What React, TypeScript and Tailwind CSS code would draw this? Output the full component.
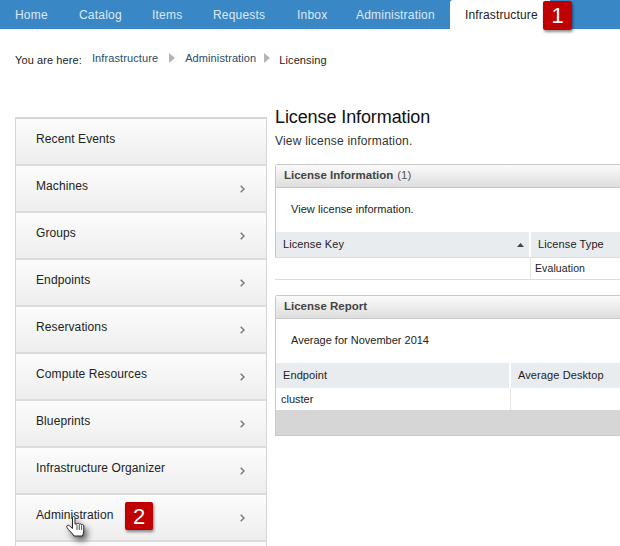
const navItems = [
  { label: 'Home', width: 'w-[64px]' },
  { label: 'Catalog', width: 'w-[73px]' },
  { label: 'Items', width: 'w-[61px]' },
  { label: 'Requests', width: 'w-[84px]' },
  { label: 'Inbox', width: 'w-[59px]' },
  { label: 'Administration', width: 'w-[94px]' },
];

const menuItems = [
  { label: 'Recent Events', arrow: false },
  { label: 'Machines', arrow: true },
  { label: 'Groups', arrow: true },
  { label: 'Endpoints', arrow: true },
  { label: 'Reservations', arrow: true },
  { label: 'Compute Resources', arrow: true },
  { label: 'Blueprints', arrow: true },
  { label: 'Infrastructure Organizer', arrow: true },
  { label: 'Administration', arrow: true },
  { label: '', arrow: false },
];

const Badge = ({ n, className }: { n: string; className: string }) => (
  <div className={`absolute flex items-center justify-center rounded-[2px] bg-[#c00000] text-[22px] text-white shadow-[1px_2px_3px_rgba(0,0,0,0.45)] ${className}`}>
    {n}
  </div>
);

const Crumb = () => (
  <svg width="6" height="10" viewBox="0 0 6 10" className="mb-[3px]">
    <path d="M0 0 L6 5 L0 10 Z" fill="#b5b5b5" />
  </svg>
);

const PanelHeader = ({ title, count }: { title: string; count?: string }) => (
  <div className="flex h-[23px] items-center border-b border-[#c8c8c8] bg-gradient-to-b from-[#fafafa] to-[#dedede] pl-[8px] text-[11.5px] font-bold text-[#444]">
    {title}
    {count && <span className="ml-[4px] font-normal text-[#555]">{count}</span>}
  </div>
);

export default function App() {
  return (
    <div className="relative h-[546px] w-[620px] overflow-hidden bg-white font-['Liberation_Sans',Arial,sans-serif] text-[12px] text-[#222]">
      {/* top nav */}
      <div className="flex h-[29px] items-stretch bg-[#3a87c5] pl-[15px] text-[12px] tracking-[0.2px] text-[#dbe9f5]">
        {navItems.map(item => (
          <div key={item.label} className={`flex items-center ${item.width}`}>
            {item.label}
          </div>
        ))}
        <div className="flex w-[100px] items-center rounded-tl-[3px] bg-white pl-[15px] tracking-[0.15px] text-[#222]">Infrastructure</div>
      </div>
      <Badge n="1" className="left-[543px] top-[1px] h-[29px] w-[29px]" />

      {/* breadcrumb */}
      <div className="mt-[23px] flex h-[15px] items-center pl-[15px] text-[11px] tracking-[0.1px]">
        <span className="mt-[1px]">You are here:</span>
        <span className="mb-[2px] ml-[10px] text-[#2a4a6b]">Infrastructure</span>
        <span className="ml-[11px]"><Crumb /></span>
        <span className="mb-[2px] ml-[10px] text-[#2a4a6b]">Administration</span>
        <span className="ml-[8px]"><Crumb /></span>
        <span className="mt-[1px] pl-[9px]">Licensing</span>
      </div>

      <div className="mt-[28px] flex items-start pl-[15px]">
        {/* side menu */}
        <div className="mt-[22px] w-[252px] shrink-0 border-t-2 border-r border-l border-[#d6d6d6]">
          {menuItems.map(item => (
            <div
              key={item.label || 'next'}
              className="flex h-[47px] items-start justify-between border-b-2 border-[#dcdcdc] bg-gradient-to-b from-[#fcfcfc] to-[#eeeeee] pt-[11px] pl-[20px] pr-[21px] text-[12px] tracking-[0.1px] last:border-b-0"
            >
              <span>{item.label}</span>
              {item.arrow && (
                <svg width="5" height="8" viewBox="0 0 5 8" className="mt-[8px]">
                  <path d="M0.7 0.7 L4 4 L0.7 7.3" fill="none" stroke="#777" strokeWidth="1.4" />
                </svg>
              )}
            </div>
          ))}
        </div>

        {/* content */}
        <div className="ml-[8px] w-[400px] shrink-0">
          <h1 className="mt-[10px] text-[18px] leading-[24px] tracking-[-0.1px] text-[#111]">License Information</h1>
          <p className="mt-[5px] text-[12px] leading-[14px] tracking-[0.2px] text-[#333]">View license information.</p>

          <div className="mt-[16px] rounded-tl-[3px] border-t border-l border-[#c8c8c8]">
            <PanelHeader title="License Information" count="(1)" />
            <div className="flex h-[44px] items-center bg-white pb-[2px] pl-[15px] text-[11px] tracking-[0.05px]">View license information.</div>
            <div className="flex h-[25px] bg-[#e9ecef] text-[11px] tracking-[0.1px]">
              <div className="flex w-[255px] items-center justify-between border-r-2 border-white pl-[7px] pr-[5px]">
                License Key
                <svg width="7" height="4" viewBox="0 0 7 4"><path d="M3.5 0 L7 4 L0 4 Z" fill="#444" /></svg>
              </div>
              <div className="flex items-center pl-[7px]">License Type</div>
            </div>
          </div>
          <div className="flex h-[23px] border-t border-b border-[#dcdcdc] text-[10.5px] tracking-[0.1px]">
            <div className="w-[256px] border-r border-[#e4e4e4]"></div>
            <div className="flex items-center pl-[4px]">Evaluation</div>
          </div>

          <div className="mt-[15px] rounded-tl-[3px] border-t border-l border-b border-[#c8c8c8]">
            <PanelHeader title="License Report" />
            <div className="flex h-[44px] items-center bg-white pb-[1px] pl-[15px] text-[11px]">Average for November 2014</div>
            <div className="flex h-[25px] bg-[#e9ecef] text-[11px] tracking-[0.1px]">
              <div className="flex w-[235px] items-center border-r-2 border-white pl-[7px]">Endpoint</div>
              <div className="flex items-center pl-[7px]">Average Desktop</div>
            </div>
            <div className="flex h-[22px] text-[11px]">
              <div className="flex w-[235px] items-center border-r border-[#e4e4e4] pl-[5px]">cluster</div>
            </div>
            <div className="h-[25px] bg-[#d6d6d6]"></div>
          </div>
        </div>
      </div>

      <Badge n="2" className="left-[125px] top-[502px] h-[28px] w-[28px]" />

      {/* hand cursor */}
      <svg
        width="26"
        height="30"
        viewBox="0 0 26 30"
        className="absolute left-[65px] top-[515px] drop-shadow-[3px_4px_3px_rgba(0,0,0,0.6)]"
      >
        <path
          d="M7.5 2.5 C7.5 1 10 1 10 2.5 L10 9 L12 9 C12.5 8.3 14 8.3 14.3 9.3 C15 8.6 16.3 8.8 16.6 9.8 C17.4 9.3 18.8 9.7 18.8 11 L18.8 16 C18.8 18 18 19 17.5 21 L9 21 C8 18.5 3.5 15.5 2 12.5 C1 10.5 3 9.5 4.5 10.8 L7.5 13.5 Z"
          fill="#fff"
          stroke="#222"
          strokeWidth="1"
        />
        <path d="M12 10 V15 M14.3 10 V15 M16.6 10.5 V15" stroke="#222" strokeWidth="0.8" fill="none" />
      </svg>
    </div>
  );
}
